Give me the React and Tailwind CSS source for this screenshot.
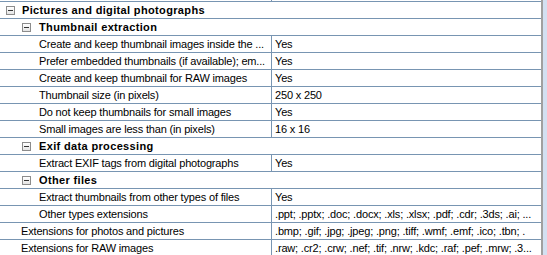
import React from "react";

const LINE = "border-[#7895b2]";

function Glyph() {
  return (
    <span className="flex h-[9px] w-[9px] shrink-0 items-center justify-center border border-[#8c8c8c] bg-gradient-to-b from-white to-[#e4e4e4]">
      <span className="h-[1px] w-[5px] bg-[#333]" />
    </span>
  );
}

function Category({ level, label }) {
  return (
    <div className={`flex h-[17px] items-center border-b ${LINE}`}>
      <div className={level === 1 ? "pl-[6px]" : "pl-[22px]"}>
        <Glyph />
      </div>
      <span className={`font-bold tracking-[0.35px] text-black ${level === 1 ? "pl-[7px]" : "pl-[8px]"}`}>
        {label}
      </span>
    </div>
  );
}

function Prop({ level, label, value }) {
  return (
    <div className={`flex h-[17px] items-center border-b ${LINE} tracking-[-0.17px]`}>
      <div
        className={`h-full w-[272px] shrink-0 overflow-hidden whitespace-nowrap border-r ${LINE} leading-[16px] ${
          level === 1 ? "pl-[21px]" : "pl-[39px]"
        }`}
      >
        {label}
      </div>
      <div className="h-full flex-1 overflow-hidden whitespace-nowrap pl-[3px] leading-[16px]">{value}</div>
    </div>
  );
}

export default function App() {
  return (
    <div
      className="flex h-[255px] w-[547px] overflow-hidden bg-white text-[11px] text-black"
      style={{ fontFamily: '"Liberation Sans", Arial, sans-serif' }}
    >
      <div className="w-[541px] shrink-0">
        <div className={`flex h-[2px] border-b ${LINE}`}>
          <div className={`w-[272px] border-r ${LINE}`} />
        </div>
        <Category level={1} label="Pictures and digital photographs" />
        <Category level={2} label="Thumbnail extraction" />
        <Prop level={2} label="Create and keep thumbnail images inside the ..." value="Yes" />
        <Prop level={2} label="Prefer embedded thumbnails (if available); em..." value="Yes" />
        <Prop level={2} label="Create and keep thumbnail for RAW images" value="Yes" />
        <Prop level={2} label="Thumbnail size (in pixels)" value="250 x 250" />
        <Prop level={2} label="Do not keep thumbnails for small images" value="Yes" />
        <Prop level={2} label="Small images are less than (in pixels)" value="16 x 16" />
        <Category level={2} label="Exif data processing" />
        <Prop level={2} label="Extract EXIF tags from digital photographs" value="Yes" />
        <Category level={2} label="Other files" />
        <Prop level={2} label="Extract thumbnails from other types of files" value="Yes" />
        <Prop
          level={2}
          label="Other types extensions"
          value=".ppt; .pptx; .doc; .docx; .xls; .xlsx; .pdf; .cdr; .3ds; .ai; ..."
        />
        <Prop
          level={1}
          label="Extensions for photos and pictures"
          value=".bmp; .gif; .jpg; .jpeg; .png; .tiff; .wmf; .emf; .ico; .tbn; ."
        />
        <Prop
          level={1}
          label="Extensions for RAW images"
          value=".raw; .cr2; .crw; .nef; .tif; .nrw; .kdc; .raf; .pef; .mrw; .3..."
        />
      </div>
      <div className="w-[2px] shrink-0 bg-[#a0a0a0]" />
      <div className="flex-1 bg-[#d3e0f1]" />
    </div>
  );
}
